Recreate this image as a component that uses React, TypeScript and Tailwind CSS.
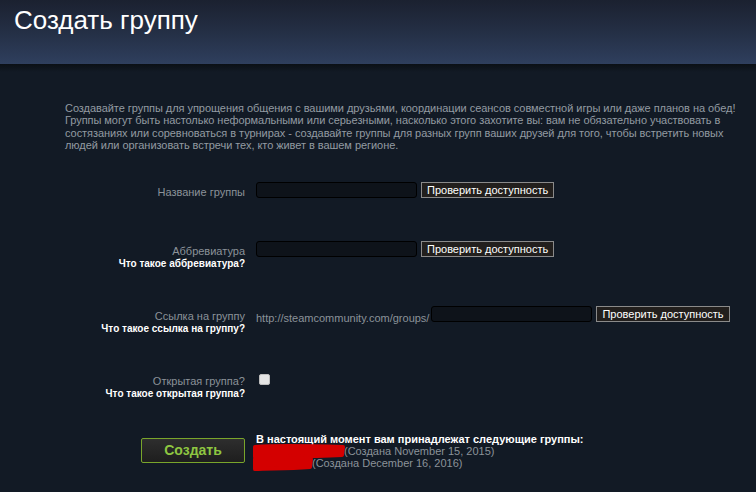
import React from 'react';

const font = { fontFamily: '"Liberation Sans", Arial, sans-serif' };

function CheckButton() {
  return (
    <button className="h-[16px] px-[5px] bg-[#221f1d] border border-[#8a8a8a] text-white text-[11px] leading-[14px] whitespace-nowrap">
      Проверить доступность
    </button>
  );
}

function TextInput() {
  return <div className="w-[161px] h-[16px] bg-[#0e131a] border border-[#000000] rounded-[3px]" />;
}

function Label({ title, hint }: { title: string; hint?: string }) {
  return (
    <div className="w-[245px] shrink-0 text-right pt-[3px]">
      <div className="text-[11px] leading-[14px] text-[#8b9299]">{title}</div>
      {hint && <div className="text-[10px] leading-[12px] font-bold text-white">{hint}</div>}
    </div>
  );
}

function Scribble({ w }: { w: number }) {
  return (
    <span className="relative inline-block align-top h-[12px]" style={{ width: w }}>
      <svg className="absolute left-[-4px] top-[-2px]" width={w + 6} height="17" viewBox={`0 0 ${w + 6} 17`}>
        <path
          d={`M3 4 C ${w * 0.3} 2, ${w * 0.7} 3, ${w + 3} 4 L ${w + 2} 12 C ${w * 0.6} 14, ${w * 0.3} 13, 3 14 Z`}
          fill="#d40000"
          stroke="#d40000"
          strokeWidth="4"
          strokeLinejoin="round"
        />
      </svg>
    </span>
  );
}

export default function App() {
  return (
    <div style={font} className="w-[756px] h-[492px] overflow-hidden bg-[#121a25]">
      {/* Header */}
      <div className="h-[64px] bg-gradient-to-b from-[#1b2130] via-[#242f45] to-[#2f3f5e] pl-[14px] pt-[4px]">
        <h1 className="text-[26px] leading-[32px] text-white">Создать группу</h1>
      </div>
      <div className="h-[8px] bg-gradient-to-b from-[#0b1016] to-[#121a25]" />

      {/* Intro */}
      <p className="pl-[65px] pt-[30px] text-[11px] leading-[12.4px] text-[#939aa2] whitespace-nowrap tracking-[-0.05px]">
        Создавайте группы для упрощения общения с вашими друзьями, координации сеансов совместной игры или даже планов на обед!
        <br />
        Группы могут быть настолько неформальными или серьезными, насколько этого захотите вы: вам не обязательно участвовать в
        <br />
        состязаниях или соревноваться в турнирах - создавайте группы для разных групп ваших друзей для того, чтобы встретить новых
        <br />
        людей или организовать встречи тех, кто живет в вашем регионе.
      </p>

      <div className="mt-[30px]">
        {/* Group name */}
        <div className="flex items-start h-[59px]">
          <Label title="Название группы" />
          <div className="ml-[11px] flex items-center gap-[4px]">
            <TextInput />
            <CheckButton />
          </div>
        </div>

        {/* Abbreviation */}
        <div className="flex items-start h-[65px]">
          <Label title="Аббревиатура" hint="Что такое аббревиатура?" />
          <div className="ml-[11px] flex items-center gap-[4px]">
            <TextInput />
            <CheckButton />
          </div>
        </div>

        {/* URL */}
        <div className="flex items-start h-[68px]">
          <Label title="Ссылка на группу" hint="Что такое ссылка на группу?" />
          <div className="ml-[11px] flex items-start">
            <span className="pt-[5px] text-[11px] leading-[14px] text-[#8b9299]">http://steamcommunity.com/groups/</span>
            <div className="ml-[2px] flex items-center gap-[4px]">
              <TextInput />
              <CheckButton />
            </div>
          </div>
        </div>

        {/* Open group */}
        <div className="flex items-start h-[59px]">
          <div className="w-[245px] shrink-0 text-right">
            <div className="text-[11px] leading-[14px] text-[#8b9299]">Открытая группа?</div>
            <div className="text-[10px] leading-[12px] font-bold text-white">Что такое открытая группа?</div>
          </div>
          <div className="ml-[14px] w-[11px] h-[11px] rounded-[2px] bg-[#e4e4e4] border border-[#bdbdbd]" />
        </div>

        {/* Create */}
        <div className="flex items-start">
          <div className="w-[245px] shrink-0 flex justify-end pt-[5px]">
            <button className="w-[104px] h-[25px] rounded-[2px] border border-[#79a52b] bg-gradient-to-b from-[#2e2e2e] to-[#1e1e1e] text-[#8ec641] text-[14px] font-bold">
              Создать
            </button>
          </div>
          <div className="ml-[11px] text-[11px] leading-[12px]">
            <div className="font-bold text-white">В настоящий момент вам принадлежат следующие группы:</div>
            <div className="text-[#8b9299]">
              <Scribble w={88} />(Создана November 15, 2015)
            </div>
            <div className="text-[#8b9299]">
              <Scribble w={56} />(Создана December 16, 2016)
            </div>
          </div>
        </div>
      </div>
    </div>
  );
}
